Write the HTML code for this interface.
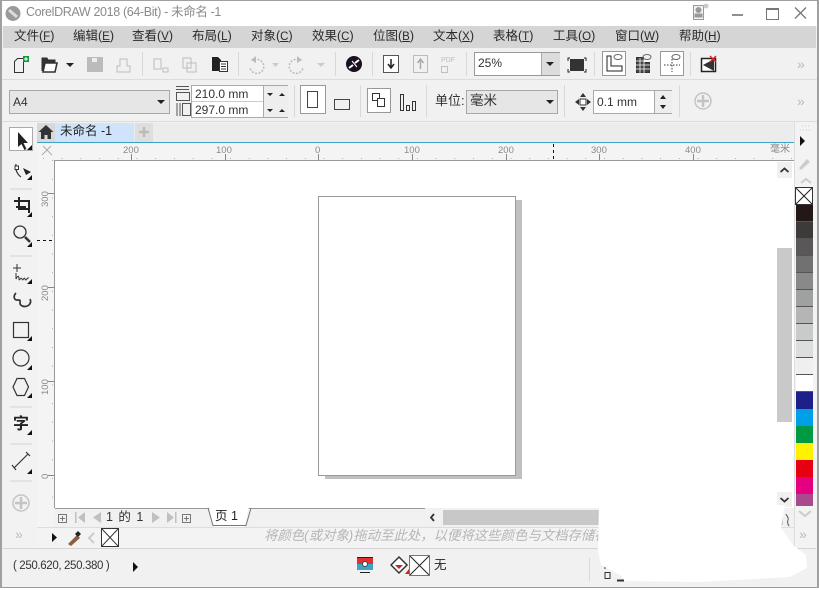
<!DOCTYPE html>
<html><head><meta charset="utf-8"><style>
html,body{margin:0;padding:0;background:#fff}
#w{position:relative;width:819px;height:590px;overflow:hidden;background:#f1f1f1;font-family:"Liberation Sans","Noto Sans CJK SC",sans-serif;color:#333}
#w div,#w span.a,#w svg{position:absolute}
.t{position:absolute;white-space:nowrap;line-height:1}
.sep{background:#d8d8d8;width:1px}
.m{position:absolute;top:29px;font-size:12.5px;line-height:15px;white-space:nowrap;color:#2a2a2a}
.m u{font-size:11.5px}
.box{background:#fff;border:1px solid #a8a8a8;box-sizing:border-box}
.sw{left:796px;width:17px;height:16px;border-bottom:1px solid #555}
</style></head><body><div id="w">
<!-- title -->
<div style="left:0;top:0;width:819px;height:26px;background:#fff"></div>
<svg style="left:5px;top:5px" width="17" height="17" viewBox="0 0 17 17"><circle cx="8" cy="8.500" r="7.500" fill="#9a9a9a"/><path d="M4 5l8 7" stroke="#ddd" stroke-width="3"/></svg>
<span class="t" style="left:26px;top:6px;font-size:12.500px;letter-spacing:-.36px;color:#8a8a8a">CorelDRAW 2018 (64-Bit) - 未命名 -1</span>
<svg style="left:690px;top:2px" width="22" height="18" viewBox="0 0 22 18" fill="none" stroke="#999"><path d="M3.500 3.500h10v14h-10z" fill="#f2f2f2"/><circle cx="8.500" cy="8" r="2.500" fill="#999"/><path d="M5 15h7v-3H5z" fill="#999"/><circle cx="16" cy="4" r="2.500" fill="#ccc" stroke="none"/></svg>
<div style="left:732px;top:14px;width:11px;height:2px;background:#8f8f8f"></div>
<div style="left:766px;top:8px;width:11px;height:9px;border:1px solid #777;border-top:2px solid #777"></div>
<svg style="left:794px;top:7px" width="13" height="12" fill="none" stroke="#777" stroke-width="1.300"><path d="M1 .5l11 11M12 .5l-11 11"/></svg>
<!-- menu -->
<div style="left:3px;top:26px;width:813px;height:22px;background:#d5d5d5"></div>
<span class="m" style="left:14px">文件(<u>F</u>)</span>
<span class="m" style="left:73px">编辑(<u>E</u>)</span>
<span class="m" style="left:132px">查看(<u>V</u>)</span>
<span class="m" style="left:192px">布局(<u>L</u>)</span>
<span class="m" style="left:251px">对象(<u>C</u>)</span>
<span class="m" style="left:312px">效果(<u>C</u>)</span>
<span class="m" style="left:373px">位图(<u>B</u>)</span>
<span class="m" style="left:433px">文本(<u>X</u>)</span>
<span class="m" style="left:493px">表格(<u>T</u>)</span>
<span class="m" style="left:553px">工具(<u>O</u>)</span>
<span class="m" style="left:615px">窗口(<u>W</u>)</span>
<span class="m" style="left:679px">帮助(<u>H</u>)</span>
<!-- toolbar 1 icons -->
<svg style="left:0;top:48px" width="819" height="32" fill="none" stroke="#333">
<path d="M14.500 24.500v-11l3-3h6v14z"/><rect x="23" y="8" width="6" height="6" fill="#0a9a3c" stroke="none"/><path d="M26 9v4M24 11h4" stroke="#fff"/>
<path d="M42 23v-13h5l1 2h7v3" fill="#333"/><path d="M43 24l2-9h12l-2 9z" fill="#fff" stroke-width="1.600"/>
<path d="M66 15h8l-4 4z" fill="#222" stroke="none"/>
<rect x="87" y="9" width="16" height="15" fill="#bbb" stroke="none"/><rect x="92" y="10" width="5" height="4" fill="#eee" stroke="none"/>
<path d="M117 24v-6h3v-7h7v7h3v6z" stroke="#bdbdbd"/>
<path d="M154 11h7v10h-7zM163 20h5v4h-5z" stroke="#bdbdbd"/><path d="M183 10h8v10h-8zM187 15h9v9h-9z" stroke="#bdbdbd"/>
<path d="M212 9h6l3 3v11h-9z" fill="#222" stroke="none"/><rect x="219.500" y="13.500" width="8" height="10" fill="#fff"/><path d="M221 16h5M221 18.500h5M221 21h5"/>
<path d="M254 12a7 7 0 1 1-4 8" stroke="#bbb" stroke-dasharray="2 1.500" stroke-width="1.500"/><path d="M256 8l-5 4 5 3z" fill="#bbb" stroke="none"/><path d="M272 15h7l-3.500 4z" fill="#ccc" stroke="none"/>
<path d="M299 12a7 7 0 1 0 4 8" stroke="#bbb" stroke-dasharray="2 1.500" stroke-width="1.500"/><path d="M297 8l5 4-5 3z" fill="#bbb" stroke="none"/><path d="M317 15h8l-4 4z" fill="#ccc" stroke="none"/>
<circle cx="354" cy="16" r="8" fill="#1a1020" stroke="none"/><path d="M349 20l4-3M359 12l-4 3" stroke="#fff" stroke-width="2"/><path d="M352 13l5 6" stroke="#fff"/>
<rect x="383.500" y="7.500" width="15" height="17" fill="#fff" stroke="#555"/><path d="M391 11v8M388 16l3 4 3-4" stroke="#222" stroke-width="1.500"/>
<rect x="413.500" y="7.500" width="14" height="17" stroke="#bbb"/><path d="M420.500 21v-9M417.500 15l3-4 3 4" stroke="#aaa" stroke-width="1.500"/>
<rect x="441.500" y="18.500" width="6" height="6" stroke="#c0c0c0"/>
<path d="M570 10h-2v3M584 10h2v3M570 24h-2v-3M584 24h2v-3" stroke="#222"/><rect x="570" y="11" width="14" height="12" fill="#333" stroke="none"/>
<rect x="602.500" y="3.500" width="23" height="24" fill="#fff" stroke="#999"/><path d="M607 8v15h15v-5h-11V8z" stroke="#222"/><ellipse cx="618" cy="9" rx="4" ry="2.500" stroke="#666"/>
<path d="M636.500 9.500h7v5h6v10h-13z" fill="#444" stroke="#333"/><path d="M636 13h14M636 17h14M636 21h14M640 10v15M644 10v15" stroke="#fff" stroke-width=".8"/><ellipse cx="647" cy="9" rx="4" ry="2.500" stroke="#666"/>
<rect x="660.500" y="3.500" width="23" height="24" fill="#fff" stroke="#999"/><path d="M672 8v16M664 17h16" stroke="#333" stroke-dasharray="1.500 1.500"/><ellipse cx="676" cy="9" rx="4" ry="2.500" stroke="#666"/>
<path d="M701.500 10.500h14v13h-14z" fill="#fff" stroke="#222" stroke-width="1.500"/><path d="M703 17l11-6v12z" fill="#333" stroke="none"/><path d="M710 8l6 6M716 8l-6 6" stroke="#d22" stroke-width="1.400"/>
</svg>
<span class="t" style="left:441px;top:57px;font-size:7px;color:#bbb">PDF</span>
<div class="sep" style="left:142px;top:52px;height:24px"></div><div class="sep" style="left:238px;top:52px;height:24px"></div><div class="sep" style="left:335px;top:52px;height:24px"></div><div class="sep" style="left:372px;top:52px;height:24px"></div><div class="sep" style="left:466px;top:52px;height:24px"></div><div class="sep" style="left:594px;top:52px;height:24px"></div><div class="sep" style="left:690px;top:52px;height:24px"></div>
<div class="box" style="left:474px;top:52px;width:86px;height:24px;border-color:#999"></div>
<span class="t" style="left:478px;top:57px;font-size:12px;color:#333">25%</span>
<div style="left:541px;top:53px;width:18px;height:22px;background:#dcdcdc;border-left:1px solid #aaa"></div>
<div style="left:546px;top:62px;border:4px solid transparent;border-top:4px solid #222"></div>
<span class="t" style="left:797px;top:57px;font-size:14px;color:#bbb">»</span>
<div style="left:0;top:79px;width:819px;height:1px;background:#dcdcdc"></div>
<!-- toolbar 2 -->
<div style="left:9px;top:90px;width:161px;height:24px;background:#e6e6e6;border:1px solid #a8a8a8;box-sizing:border-box"></div>
<span class="t" style="left:13px;top:96px;font-size:12px;color:#333">A4</span>
<div style="left:157px;top:100px;border:4px solid transparent;border-top:4px solid #222"></div>
<svg style="left:175px;top:84px" width="18" height="34" fill="none" stroke="#555"><path d="M1 2.500h13M1 5.500h13"/><rect x="1.500" y="8.500" width="13" height="8"/><path d="M2 19v13M5 19v13"/><rect x="7.500" y="19.500" width="8" height="12"/></svg>
<div class="box" style="left:191px;top:85px;width:97px;height:33px;border-color:#aaa"></div>
<div style="left:192px;top:101px;width:95px;height:1px;background:#ccc"></div>
<div style="left:263px;top:86px;width:24px;height:31px;background:#eee;border-left:1px solid #aaa"></div>
<span class="t" style="left:195px;top:88px;font-size:12px">210.0 mm</span>
<span class="t" style="left:195px;top:104px;font-size:12px">297.0 mm</span>
<svg style="left:264px;top:86px" width="24" height="32" fill="#222"><path d="M3 7h6l-3 3zM15 10h6l-3-3zM3 23h6l-3 3zM15 26h6l-3-3z"/></svg>
<div class="sep" style="left:294px;top:85px;height:32px"></div>
<svg style="left:300px;top:85px" width="60" height="34" fill="none" stroke="#444"><rect x=".5" y=".5" width="25" height="28" fill="#fff" stroke="#999"/><rect x="7.500" y="6.500" width="10" height="16"/><rect x="34.500" y="14.500" width="15" height="10"/></svg>
<div class="sep" style="left:360px;top:85px;height:32px"></div>
<svg style="left:367px;top:88px" width="54" height="28" fill="none" stroke="#333"><rect x=".5" y=".5" width="23" height="24" fill="#fff" stroke="#999"/><rect x="5.500" y="5.500" width="7" height="7"/><rect x="10.500" y="10.500" width="7" height="8" fill="#fff"/><rect x="33.500" y="6.500" width="3" height="16"/><rect x="39.500" y="17.500" width="3" height="5"/><rect x="45.500" y="13.500" width="3" height="9"/></svg>
<div class="sep" style="left:426px;top:85px;height:32px"></div>
<span class="t" style="left:435px;top:94px;font-size:13px">单位:</span>
<div style="left:466px;top:90px;width:92px;height:24px;background:#e6e6e6;border:1px solid #a8a8a8;box-sizing:border-box"></div>
<span class="t" style="left:470px;top:94px;font-size:13.500px">毫米</span>
<div style="left:546px;top:100px;border:4px solid transparent;border-top:4px solid #222"></div>
<div class="sep" style="left:564px;top:85px;height:32px"></div>
<svg style="left:575px;top:92px" width="16" height="20" fill="#333"><rect x="5" y="7" width="6" height="6" fill="#fff" stroke="#333"/><path d="M8 1l3 4H5zM8 19l3-4H5zM0 10l4-3v6zM16 10l-4-3v6z"/></svg>
<div class="box" style="left:593px;top:90px;width:79px;height:24px;border-color:#aaa"></div>
<span class="t" style="left:597px;top:96px;font-size:12px">0.1 mm</span>
<div style="left:654px;top:91px;width:17px;height:22px;background:#eee;border-left:1px solid #aaa"></div>
<svg style="left:655px;top:91px" width="16" height="22" fill="#222"><path d="M5 8h6l-3-4zM5 14h6l-3 4z"/></svg>
<div class="sep" style="left:679px;top:85px;height:32px"></div>
<svg style="left:694px;top:92px" width="18" height="18" fill="none" stroke="#c4c4c4"><circle cx="9" cy="9" r="8" stroke-width="1.500"/><path d="M9 3v12M3 9h12" stroke-width="2.500"/></svg>
<span class="t" style="left:797px;top:94px;font-size:14px;color:#bbb">»</span>
<div style="left:0;top:121px;width:819px;height:1px;background:#dcdcdc"></div>
<!-- tabs -->
<div style="left:37px;top:123px;width:756px;height:19px;background:#ececec"></div>
<div style="left:37px;top:123px;width:18px;height:19px;background:#d8d8d8"></div>
<svg style="left:38px;top:124px" width="16" height="16" fill="#333"><path d="M8 1L.5 8H3v7h3.500v-4h3v4H13V8h2.500z"/></svg>
<div style="left:55px;top:123px;width:79px;height:19px;background:#cfe4fa"></div>
<span class="t" style="left:60px;top:125px;font-size:12.500px;color:#222">未命名 -1</span>
<div style="left:135px;top:123px;width:18px;height:19px;background:#dedede"></div>
<svg style="left:137px;top:125px" width="14" height="14" stroke="#bbb" stroke-width="2.500"><path d="M7 2v10M2 7h10"/></svg>
<div style="left:37px;top:142px;width:757px;height:1px;background:#3ba3c8"></div>
<!-- rulers -->
<div style="left:37px;top:143px;width:757px;height:17px;background:#f4f4f4"></div>
<div style="left:37px;top:160px;width:17px;height:368px;background:#f4f4f4"></div>
<div style="left:54px;top:160px;width:740px;height:1px;background:#999"></div>
<div style="left:54px;top:160px;width:1px;height:348px;background:#999"></div>
<svg style="left:37px;top:143px" width="757" height="18" font-family="Liberation Sans,sans-serif" font-size="9.500" fill="#8a8a8a" stroke="none">
<text x="86" y="10">200</text><text x="179" y="10">100</text><text x="278" y="10">0</text><text x="367" y="10">100</text><text x="461" y="10">200</text><text x="554" y="10">300</text><text x="648" y="10">400</text>
<path d="M94.500 11v6M188.500 11v6M281.500 11v6M375.500 11v6M469.500 11v6M562.500 11v6M656.500 11v6" stroke="#888"/>
<path d="M6 15.500H757" stroke="#aaa" stroke-dasharray="1 17.700"/>
<path d="M516.500 1v16" stroke="#111" stroke-dasharray="3 3"/>
<path d="M6 3l9 9M14 3l-9 9" stroke="#aaa"/>
</svg>
<span class="t" style="left:770px;top:145px;font-size:10px;color:#888">毫米</span>
<svg style="left:37px;top:160px" width="18" height="350" font-family="Liberation Sans,sans-serif" font-size="9.500" fill="#8a8a8a">
<text transform="translate(11,47) rotate(-90)">300</text><text transform="translate(11,141) rotate(-90)">200</text><text transform="translate(11,235) rotate(-90)">100</text><text transform="translate(11,319) rotate(-90)">0</text>
<path d="M11 33.500h6M11 127.500h6M11 221.500h6M11 315.500h6" stroke="#888"/>
<path d="M15.500 0V350" stroke="#aaa" stroke-dasharray="1 17.700"/>
<path d="M0 80.500h17" stroke="#111" stroke-dasharray="3 3"/>
</svg>
<!-- canvas -->
<div style="left:55px;top:161px;width:739px;height:347px;background:#fff"></div>
<div style="left:325px;top:200px;width:197px;height:279px;background:#c0c0c0"></div>
<div style="left:318px;top:196px;width:198px;height:280px;background:#fff;border:1px solid #9a9a9a;box-sizing:border-box"></div>
<!-- left toolbox -->
<div style="left:3px;top:122px;width:34px;height:427px;background:#f2f2f2"></div>
<div style="left:9px;top:127px;width:24px;height:24px;background:#fff;border:1px solid #aaa;box-sizing:border-box"></div>
<svg style="left:3px;top:122px" width="34" height="427" fill="none" stroke="#333">
<path d="M15 10v15l3.500-3 3 6 2-1-3-6h4.500z" fill="#222" stroke="none"/><path d="M29 28v-5l-5 5z" fill="#111" stroke="none"/>
<path d="M13 42c-1 6 1 10 5 13" stroke-width="1.200"/><rect x="12" y="44" width="3.500" height="3.500" fill="#fff"/><path d="M20 46l8 4-5 3z" fill="#222" stroke="none"/><path d="M29 58v-5l-5 5z" fill="#111" stroke="none"/>
<path d="M7 67h22" stroke="#d4d4d4"/>
<path d="M16 75v12h10v4M11 79h15V90M13 85h10" stroke="#222" stroke-width="2"/><path d="M29 95v-5l-5 5z" fill="#111" stroke="none"/>
<circle cx="17" cy="110" r="6" stroke-width="1.300"/><path d="M22 115l5 5" stroke-width="2.500"/><path d="M29 125v-5l-5 5z" fill="#111" stroke="none"/>
<path d="M7 134h22" stroke="#d4d4d4"/>
<path d="M14 142v8M10 146h8M13 151v6c2-4 3-3 3 0s2-3 3 0 2-3 3 0 2-2 4-1" stroke-width="1"/><path d="M29 162v-5l-5 5z" fill="#111" stroke="none"/>
<path d="M13 171c-3 3-2 7 1 7 4 0 3 0 3 3s5 5 9 2c2-2 2-4 1-6" stroke-width="1.700"/>
<rect x="10.500" y="200.500" width="15" height="15" stroke-width="1.200"/><path d="M29 219v-5l-5 5z" fill="#111" stroke="none"/>
<circle cx="18" cy="236" r="8" stroke-width="1.200"/><path d="M29 248v-5l-5 5z" fill="#111" stroke="none"/>
<path d="M14 256.500h7.500l4 8.500-4 8.500H14l-4-8.500z" stroke-width="1.200"/><path d="M29 276v-5l-5 5z" fill="#111" stroke="none"/>
<path d="M7 285h22" stroke="#d4d4d4"/>
<path d="M29 313v-5l-5 5z" fill="#111" stroke="none"/>
<path d="M7 322h22" stroke="#d4d4d4"/>
<path d="M11 346l14-14M9 343l4 5M23 330l4 4" stroke-width="1.200"/><path d="M29 352v-5l-5 5z" fill="#111" stroke="none"/>
<path d="M7 359h22" stroke="#d4d4d4"/>
<circle cx="18" cy="381" r="8" stroke="#c4c4c4" stroke-width="1.500"/><path d="M18 375v12M12 381h12" stroke="#c4c4c4" stroke-width="2.500"/>
</svg>
<span class="t" style="left:13px;top:417px;font-size:16px;font-weight:bold;color:#222">字</span>
<span class="t" style="left:15px;top:527px;font-size:14px;color:#bbb">»</span>
<!-- page nav -->
<div style="left:55px;top:508px;width:370px;height:19px;background:#f1f1f1;border-top:1px solid #999;box-sizing:border-box"></div>
<div style="left:209px;top:507px;width:40px;height:20px;background:#fff;clip-path:polygon(0 0,100% 0,88% 100%,12% 100%)"></div>
<svg style="left:55px;top:507px" width="372" height="21" fill="#c0c0c0">
<path d="M151 2l2 0 5 16H193l5-17" fill="none"/><path d="M153 1l5 17.500h33l5-17.500" fill="none" stroke="#777"/>
<rect x="3.500" y="7.500" width="8" height="8" fill="none" stroke="#777"/><path d="M7.500 9v5M5 11.500h5" stroke="#777"/>
<path d="M20 5v11h1.500V5zM30 5v11l-7-5.500zM46 5v11l-8-5.500z"/>
<path d="M97 5v11l8-5.500zM112 5v11l7-5.500zM120 5v11h1.500V5z"/>
<rect x="127.500" y="7.500" width="8" height="8" fill="none" stroke="#777"/><path d="M131.500 9v5M129 11.500h5" stroke="#777"/>
</svg>
<span class="t" style="left:106px;top:511px;font-size:12.500px;word-spacing:2px;color:#333">1 的 1</span>
<span class="t" style="left:215px;top:510px;font-size:12.500px;color:#222">页 1</span>
<!-- h scrollbar -->
<div style="left:425px;top:509px;width:17px;height:17px;background:#f1f1f1"></div>
<svg style="left:428px;top:512px" width="10" height="11" fill="none" stroke="#333" stroke-width="1.800"><path d="M6 2l-3 3.500 3 3.500"/></svg>
<div style="left:443px;top:510px;width:340px;height:15px;background:#c8c8c8"></div>
<!-- v scrollbar -->
<div style="left:777px;top:161px;width:16px;height:347px;background:#fff"></div>
<div style="left:777px;top:162px;width:15px;height:16px;background:#f0f0f0"></div>
<svg style="left:779px;top:166px" width="11" height="8" fill="none" stroke="#333" stroke-width="1.800"><path d="M1.500 6l4-3.500 4 3.500"/></svg>
<div style="left:777px;top:248px;width:15px;height:174px;background:#c9c9c9"></div>
<div style="left:777px;top:492px;width:15px;height:15px;background:#f0f0f0"></div>
<svg style="left:779px;top:496px" width="11" height="8" fill="none" stroke="#333" stroke-width="1.800"><path d="M1.500 2l4 3.500 4-3.500"/></svg>
<!-- palette -->
<div style="left:794px;top:122px;width:22px;height:427px;background:#f3f3f3;border-left:1px solid #ddd;box-sizing:border-box"></div>
<svg style="left:797px;top:123px" width="18" height="64" fill="#bbb"><path d="M3 7h12M5 3h8" stroke="#ccc" stroke-dasharray="1 2"/><path d="M3 15l5 5-5 5z" fill="#111" transform="translate(0 -2)"/><path d="M2 45l8-9 3 3-9 8z" fill="#ccc"/><path d="M4 60l5-4 5 4" fill="none" stroke="#ccc" stroke-width="2"/></svg>
<div style="left:795px;top:187px;width:18px;height:18px;background:#fff;border:1px solid #333;box-sizing:border-box"></div>
<svg style="left:796px;top:188px" width="16" height="16" stroke="#222"><path d="M0 0l16 16M16 0L0 16"/></svg>
<div class="sw" style="top:205px;background:#231815"></div>
<div class="sw" style="top:222px;background:#3e3a39"></div>
<div class="sw" style="top:239px;background:#595757"></div>
<div class="sw" style="top:256px;background:#727171"></div>
<div class="sw" style="top:273px;background:#898989"></div>
<div class="sw" style="top:290px;background:#9fa0a0"></div>
<div class="sw" style="top:307px;background:#b5b5b6"></div>
<div class="sw" style="top:324px;background:#c9caca"></div>
<div class="sw" style="top:341px;background:#dcdddd"></div>
<div class="sw" style="top:358px;background:#efefef"></div>
<div class="sw" style="top:375px;background:#fff"></div>
<div class="sw" style="top:392px;background:#1d2088;border:0;height:17px"></div>
<div class="sw" style="top:409px;background:#00a0e9;border:0;height:17px"></div>
<div class="sw" style="top:426px;background:#009944;border:0;height:17px"></div>
<div class="sw" style="top:443px;background:#fff100;border:0;height:17px"></div>
<div class="sw" style="top:460px;background:#e60012;border:0;height:17px"></div>
<div class="sw" style="top:477px;background:#e4007f;border:0;height:17px"></div>
<div class="sw" style="top:494px;background:#a84a8b;border:0;height:12px"></div>
<svg style="left:796px;top:509px" width="18" height="36" fill="none" stroke="#ccc" stroke-width="2"><path d="M3 2l6 5 6-5"/></svg>
<span class="t" style="left:799px;top:527px;font-size:14px;color:#bbb">»</span>
<!-- palette row -->
<div style="left:37px;top:527px;width:757px;height:21px;background:#f3f3f3;border-top:1px solid #ddd;box-sizing:border-box"></div>
<svg style="left:50px;top:528px" width="75" height="20"><path d="M2 5l5 4.500L2 14z" fill="#111"/><path d="M18 16l9-9 3 3-9 8z" fill="#8a6040"/><path d="M25 6l3-3 3 3-3 3z" fill="#222"/><path d="M44 5l-5 5 5 5" fill="none" stroke="#ccc" stroke-width="2"/></svg>
<div style="left:101px;top:528px;width:18px;height:19px;background:#fff;border:1px solid #333;box-sizing:border-box"></div>
<svg style="left:102px;top:529px" width="16" height="17" stroke="#333"><path d="M0 0l16 17M16 0L0 17"/></svg>
<span class="t" style="left:264px;top:529px;font-size:13.400px;font-style:italic;color:#b5b5b5">将颜色(或对象)拖动至此处，以便将这些颜色与文档存储在一起</span>
<!-- status -->
<div style="left:3px;top:548px;width:813px;height:1px;background:#d4d4d4"></div>
<div style="left:3px;top:549px;width:813px;height:38px;background:#f1f1f1"></div>
<span class="t" style="left:13px;top:561px;font-size:11.500px;letter-spacing:-.36px;color:#333">( 250.620, 250.380 )</span>
<svg style="left:132px;top:562px" width="7" height="10" fill="#111"><path d="M1 0l5 5-5 5z"/></svg>
<svg style="left:357px;top:557px" width="17" height="17"><rect x="0" y="0" width="16" height="7" fill="#d33"/><rect x="0" y="7" width="16" height="6" fill="#3aa5c5"/><circle cx="8" cy="7" r="2.500" fill="#fff" stroke="#444"/><path d="M0 .5h16M3 15.500h10" stroke="#222"/></svg>
<svg style="left:390px;top:555px" width="20" height="20"><path d="M9 2l8 8-8 8-8-8z" fill="#fff" stroke="#333" stroke-width="1.500"/><path d="M5 10h8l-4 4z" fill="#c22"/><path d="M15 19l4-5v5z" fill="#c22"/></svg>
<div style="left:409px;top:555px;width:21px;height:21px;background:#fff;border:1px solid #777;box-sizing:border-box"></div>
<svg style="left:410px;top:556px" width="19" height="19" stroke="#222"><path d="M0 0l19 19M19 0L0 19"/></svg>
<span class="t" style="left:434px;top:559px;font-size:12.500px;color:#222">无</span>
<div class="sep" style="left:589px;top:558px;height:23px"></div>
<svg style="left:603px;top:565px" width="24" height="17" fill="none" stroke="#333"><path d="M2 1v3M2 7.500h5v6H2z"/><path d="M14 15.500h7" stroke-width="2"/></svg>
<!-- white scribble -->
<svg style="left:0;top:0" width="819" height="590"><path d="M599 505H785L781 528 793 545 806 555 807 568 790 577 700 582 625 581 620 575 601 565 598 550z" fill="#fff"/><path d="M786 514c1 3 3 3 2 6s0 4 1 6" fill="none" stroke="#555"/></svg>
<!-- frame -->
<div style="left:0;top:0;width:819px;height:590px;border:1px solid #a0a0a0;border-left-width:2px;border-right-width:2px;border-bottom-width:2px;box-sizing:border-box"></div>
<div style="left:0;top:588px;width:819px;height:2px;background:#fff"></div>
<div style="left:2px;top:587px;width:815px;height:1px;background:#9a9a9a"></div>
</div></body></html>
